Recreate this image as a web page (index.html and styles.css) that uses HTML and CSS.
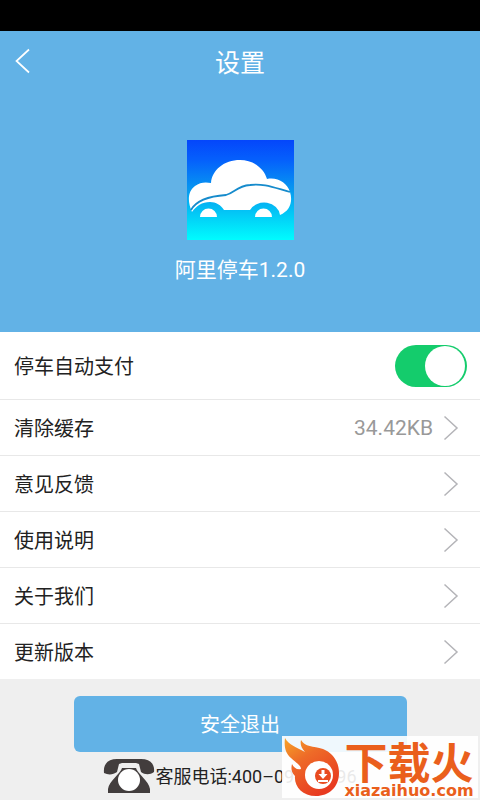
FILE: index.html
```html
<!DOCTYPE html>
<html lang="zh-CN">
<head>
<meta charset="utf-8">
<meta name="viewport" content="width=device-width, initial-scale=1">
<title>设置</title>
<link rel="stylesheet" href="styles.css">
</head>
<body>
<div class="status-bar"></div>
<header class="hero">
  <div class="nav">
    <button class="back" type="button" aria-label="返回">
      <svg width="16" height="26" viewBox="0 0 16 26"><path d="M14 1.500 L1.500 13 L14 24.500" fill="none" stroke="#fff" stroke-width="1.700"/></svg>
    </button>
    <h1 class="title">设置</h1>
  </div>
  <svg class="logo" width="107" height="100" viewBox="0 0 107 100" aria-hidden="true">
    <defs>
      <linearGradient id="sky" x1="0" y1="0" x2="0" y2="1">
        <stop offset="0" stop-color="#0446fb"/>
        <stop offset=".2" stop-color="#0560fc"/>
        <stop offset=".5" stop-color="#0799f0"/>
        <stop offset=".8" stop-color="#02d5f8"/>
        <stop offset="1" stop-color="#00fcff"/>
      </linearGradient>
    </defs>
    <rect width="107" height="100" fill="url(#sky)"/>
    <path d="M5 72 C0 61 1 51 8 46 C13 42 19 42 24 43 C25 30 37 20 53 20 C66 20 77 28 80 39 C91 37 100 43 103 52 C106 62 103 71 93 75 A16 14 0 0 0 63 70 L37 70 C34 65 29 62 23 62 C15 62 9 66 5 72Z" fill="#fff"/>
    <path d="M4 70 C10 59 24 56 39 55 C47 53 50 46 63 45 C76 43 88 48 103 52" fill="none" stroke="#168bcc" stroke-width="1.800"/>
    <path d="M13 77 A8.500 8.500 0 0 1 30 77Z M68 77 A8.500 8.500 0 0 1 85 77Z" fill="#fff"/>
  </svg>
  <p class="version">阿里停车1.2.0</p>
</header>
<main class="list">
  <label class="row row-switch">
    <span>停车自动支付</span>
    <input class="switch" type="checkbox" role="switch" checked>
  </label>
  <a class="row" href="#cache"><span>清除缓存</span><span class="value">34.42KB</span><svg class="arrow" width="16" height="26" viewBox="0 0 16 26"><path d="M1.500 1.500 L14 13 L1.500 24.500"/></svg></a>
  <a class="row" href="#feedback"><span>意见反馈</span><svg class="arrow" width="16" height="26" viewBox="0 0 16 26"><path d="M1.500 1.500 L14 13 L1.500 24.500"/></svg></a>
  <a class="row" href="#guide"><span>使用说明</span><svg class="arrow" width="16" height="26" viewBox="0 0 16 26"><path d="M1.500 1.500 L14 13 L1.500 24.500"/></svg></a>
  <a class="row" href="#about"><span>关于我们</span><svg class="arrow" width="16" height="26" viewBox="0 0 16 26"><path d="M1.500 1.500 L14 13 L1.500 24.500"/></svg></a>
  <a class="row" href="#update"><span>更新版本</span><svg class="arrow" width="16" height="26" viewBox="0 0 16 26"><path d="M1.500 1.500 L14 13 L1.500 24.500"/></svg></a>
</main>
<footer class="footer">
  <button class="logout" type="button">安全退出</button>
  <a class="hotline" href="tel:4000960696">
    <svg width="52" height="36" viewBox="0 0 52 36" aria-hidden="true">
      <path d="M1 15 C0 6 5 1 14 1 L38 1 C47 1 52 6 51 14 C47 17 42 17 38 14 L36 6 L33 5 L33 10 C34 15 46 23 47 31 L47 35 L5 35 L5 31 C6 23 18 15 19 10 L19 5 L16 6 L14 14 C10 17 5 17 1 15Z" fill="#423d3d"/>
      <path d="M19 5 H33 V10 H19Z" fill="#efefef"/>
      <circle cx="26" cy="22" r="11" fill="#fff"/>
    </svg>
    <span>客服电话:400–096–0696</span>
  </a>
</footer>
<aside class="watermark">
  <svg width="58" height="62" viewBox="0 0 58 62" aria-hidden="true">
    <defs>
      <linearGradient id="flame" x1="0" y1="0" x2=".6" y2="1">
        <stop offset="0" stop-color="#f6a428"/>
        <stop offset=".4" stop-color="#ee6b28"/>
        <stop offset="1" stop-color="#e83a20"/>
      </linearGradient>
    </defs>
    <path d="M3 2 C7 9 14 11 23 16 C19 12 18 8 19 4 C23 11 31 10 41 13 C51 17 57 26 57 37 C57 51 47 60 34 60 C20 60 12 50 13 40 C9 36 9 32 10 28 C12 32 15 34 19 33 C19 29 14 27 9 22 C3 17 2 10 3 2Z" fill="url(#flame)"/>
    <circle cx="37" cy="39" r="14" fill="#fff"/>
    <circle cx="41" cy="40" r="8" fill="#e94b20"/>
    <path d="M39.500 34 h3 v4 h3 l-4.500 5 l-4.500 -5 h3Z M36 44 h10 v2 h-10Z" fill="#fff"/>
  </svg>
  <div class="brand">
    <span class="brand-name">下载火</span>
    <span class="brand-site">xiazaihuo.com</span>
  </div>
</aside>
</body>
</html>
```
FILE: styles.css
```css
* { box-sizing: border-box; }

body {
  position: relative;
  display: flex;
  flex-direction: column;
  min-height: 100vh;
  margin: 0;
  background: #efefef;
  color: #222;
  font-family: Roboto, "Noto Sans CJK SC", sans-serif;
  font-size: 20px;
  line-height: 28px;
}

button { font: inherit; border: 0; cursor: pointer; }
a { color: inherit; text-decoration: none; }

.status-bar { height: 31px; background: #000; }

.hero {
  display: flex;
  flex-direction: column;
  align-items: center;
  padding-bottom: 48px;
  background: #62b2e6;
  color: #fff;
}

.nav {
  display: grid;
  grid-template-columns: 48px 1fr 48px;
  align-items: center;
  align-self: stretch;
  height: 60px;
}

.back {
  display: flex;
  padding: 0 0 0 15px;
  background: none;
}

.title {
  margin: 0;
  padding-top: 5px;
  text-align: center;
  font-size: 25px;
  font-weight: 400;
}

.logo { margin-top: 49px; }

.version {
  margin: 16px 0 0;
  font-size: 21px;
}

.list { background: #fff; }

.row {
  display: flex;
  align-items: center;
  gap: 10px;
  height: 56px;
  padding: 0 21px 0 14px;
  border-bottom: 1px solid #e8e8e8;
}

.row > span { padding-top: 2px; }

.row:last-child {
  height: 55px;
  border-bottom: 0;
}

.row-switch {
  justify-content: space-between;
  height: 68px;
  padding-right: 13px;
}

.row > .value {
  margin-left: auto;
  padding-top: 0;
  color: #999;
  font-size: 21px;
}

.arrow {
  margin-left: auto;
  fill: none;
  stroke: #b4b4b8;
  stroke-width: 1.5;
}

.value + .arrow { margin-left: 0; }

.switch {
  display: flex;
  justify-content: flex-end;
  appearance: none;
  width: 72px;
  height: 42px;
  margin: 0;
  padding: 1px 2px;
  border-radius: 21px;
  background: #14cc6c;
}

.switch::before {
  content: "";
  width: 40px;
  height: 40px;
  border-radius: 50%;
  background: #fff;
}

.switch:not(:checked) {
  justify-content: flex-start;
  background: #ccc;
}

.footer {
  display: flex;
  flex-direction: column;
  align-items: center;
  gap: 6px;
  padding-top: 17px;
}

.logout {
  width: 70%;
  max-width: 333px;
  height: 56px;
  padding-top: 3px;
  border-radius: 6px;
  background: #62b2e6;
  color: #fff;
}

.hotline {
  display: flex;
  align-items: center;
  padding-right: 20px;
  font-size: 18px;
}

.hotline span { padding-top: 2px; }

.watermark {
  position: absolute;
  right: 2px;
  bottom: 2px;
  display: flex;
  width: 196px;
  height: 62px;
  background: rgba(255, 255, 255, 0.9);
  color: #ea5f1c;
}

.brand {
  flex: 1;
  display: flex;
  flex-direction: column;
  align-items: center;
  white-space: nowrap;
}

.brand-name {
  font-family: "Noto Sans CJK SC", sans-serif;
  font-size: 43px;
  font-weight: 700;
  line-height: 48px;
}

.brand-site {
  font-family: "DejaVu Sans", sans-serif;
  font-size: 16px;
  font-weight: 700;
  line-height: 14px;
}
```
